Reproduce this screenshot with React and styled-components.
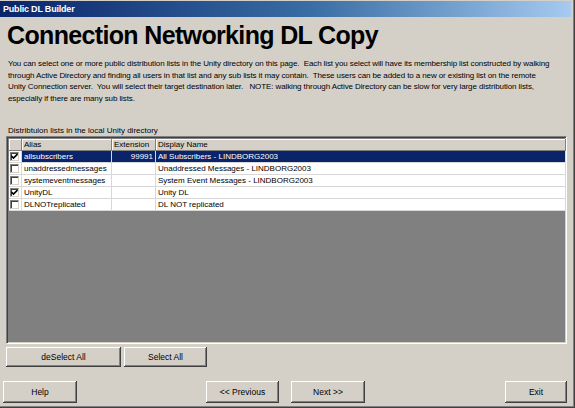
import styled, { createGlobalStyle } from "styled-components";

const GlobalStyle = createGlobalStyle`
  html, body {
    margin: 0;
    padding: 0;
    background: #d4d0c8;
  }
  body {
    font-family: "Liberation Sans", Arial, sans-serif;
    color: #000;
  }
`;

const Window = styled.div`
  width: 575px;
  height: 408px;
  box-sizing: border-box;
  padding: 1px 3px 2px 0;
  background: #d4d0c8;
  border-right: 1px solid #404040;
  border-bottom: 1px solid #404040;
  box-shadow: inset -1px -1px 0 #808080;
  display: flex;
  flex-direction: column;
  overflow: hidden;
`;

const TitleBar = styled.div`
  height: 16px;
  display: flex;
  align-items: center;
  padding-left: 3px;
  background: linear-gradient(to right, #0a246a 0%, #3a6ea5 55%, #a6caf0 100%);
  color: #fff;
  font-weight: bold;
  font-size: 9px;
  letter-spacing: -0.2px;
`;

const Heading = styled.h1`
  margin: 3px 0 0 7px;
  font-size: 25px;
  line-height: 30px;
  letter-spacing: -0.65px;
  font-weight: bold;
`;

const Intro = styled.p`
  margin: 8px 0 0 8px;
  font-size: 8px;
  line-height: 11.6px;
  letter-spacing: -0.1px;
  white-space: nowrap;

  span {
    display: block;
  }
`;

const Label = styled.div`
  margin: 21px 0 0 8px;
  font-size: 8px;
  line-height: 11px;
`;

const ListBox = styled.div`
  margin: 0 0 0 6px;
  width: 561px;
  height: 208px;
  box-sizing: border-box;
  border-top: 1px solid #808080;
  border-left: 1px solid #808080;
  border-right: 1px solid #fff;
  border-bottom: 1px solid #fff;
  box-shadow: inset 1px 1px 0 #404040, inset -1px -1px 0 #d4d0c8;
  padding: 2px 0 0 2px;
  background: #808080;
  display: flex;
  flex-direction: column;
  overflow: hidden;
`;

const Grid = styled.div`
  display: grid;
  grid-template-columns: 13px 90px 44px 1fr;
  font-size: 8px;
`;

const HeadCell = styled.div`
  height: 12px;
  line-height: 12px;
  padding-left: 2px;
  background: #d4d0c8;
  box-shadow: inset -1px -1px 0 #808080, inset 1px 1px 0 #fff;
  white-space: nowrap;
  overflow: hidden;
`;

const Cell = styled.div`
  height: 12px;
  line-height: 12px;
  box-sizing: border-box;
  padding: 0 2px;
  border-right: 1px solid #d8d8d8;
  border-bottom: 1px solid #d8d8d8;
  background: ${(p) => (p.$selected ? "#0a246a" : "#fff")};
  color: ${(p) => (p.$selected ? "#fff" : "#000")};
  text-align: ${(p) => (p.$right ? "right" : "left")};
  white-space: nowrap;
  overflow: hidden;
`;

const CheckCell = styled(Cell)`
  display: flex;
  align-items: center;
  padding: 0 0 0 1px;
  background: #fff;
`;

const Box = styled.div`
  width: 9px;
  height: 9px;
  box-sizing: border-box;
  background: #fff;
  border-top: 1px solid #808080;
  border-left: 1px solid #808080;
  border-right: 1px solid #d4d0c8;
  border-bottom: 1px solid #d4d0c8;
  box-shadow: inset 1px 1px 0 #404040;
  display: flex;
  align-items: center;
  justify-content: center;
`;

const ButtonRow = styled.div`
  display: flex;
  gap: ${(p) => p.$gap || "3px"};
  margin: ${(p) => p.$margin};
`;

const Button = styled.button`
  width: ${(p) => p.$w}px;
  height: ${(p) => p.$h || 20}px;
  margin-left: ${(p) => p.$ml || 0}px;
  padding: 0;
  font-family: "Liberation Sans", Arial, sans-serif;
  font-size: 8.5px;
  color: #000;
  background: #d4d0c8;
  border: none;
  box-shadow: inset -1px -1px 0 #404040, inset 1px 1px 0 #fff,
    inset -2px -2px 0 #808080;
`;

function Check({ on }) {
  return (
    <Box>
      {on && (
        <svg width="7" height="7" viewBox="0 0 7 7">
          <path d="M0.5 3 L2.5 5 L6.5 1" fill="none" stroke="#000" strokeWidth="1.6" />
        </svg>
      )}
    </Box>
  );
}

const rows = [
  { on: true, alias: "allsubscribers", ext: "99991", name: "All Subscribers - LINDBORG2003", sel: true },
  { on: false, alias: "unaddressedmessages", ext: "", name: "Unaddressed Messages - LINDBORG2003" },
  { on: false, alias: "systemeventmessages", ext: "", name: "System Event Messages - LINDBORG2003" },
  { on: true, alias: "UnityDL", ext: "", name: "Unity DL" },
  { on: false, alias: "DLNOTreplicated", ext: "", name: "DL NOT replicated" },
];

export default function App() {
  return (
    <>
      <GlobalStyle />
      <Window>
        <TitleBar>Public DL Builder</TitleBar>
        <Heading>Connection Networking DL Copy</Heading>
        <Intro>
          <span>You can select one or more public distribution lists in the Unity directory on this page.&nbsp; Each list you select will have its membership list constructed by walking</span>
          <span>through Active Directory and finding all users in that list and any sub lists it may contain.&nbsp; These users can be added to a new or existing list on the remote</span>
          <span>Unity Connection server.&nbsp; You will select their target destination later.&nbsp;&nbsp; NOTE: walking through Active Directory can be slow for very large distribution lists,</span>
          <span>especially if there are many sub lists.</span>
        </Intro>
        <Label>Distribtuion lists in the local Unity directory</Label>
        <ListBox>
          <Grid>
            <HeadCell />
            <HeadCell>Alias</HeadCell>
            <HeadCell>Extension</HeadCell>
            <HeadCell>Display Name</HeadCell>
            {rows.map((r) => [
              <CheckCell key={r.alias + "c"}>
                <Check on={r.on} />
              </CheckCell>,
              <Cell key={r.alias} $selected={r.sel}>{r.alias}</Cell>,
              <Cell key={r.alias + "e"} $selected={r.sel} $right>{r.ext}</Cell>,
              <Cell key={r.alias + "n"} $selected={r.sel}>{r.name}</Cell>,
            ])}
          </Grid>
        </ListBox>
        <ButtonRow $margin="3px 0 0 6px">
          <Button $w={115}>deSelect All</Button>
          <Button $w={83}>Select All</Button>
        </ButtonRow>
        <ButtonRow $margin="14px 0 0 3px" $gap="0">
          <Button $w={74} $h={22}>Help</Button>
          <Button $w={73} $h={22} $ml={129}>&lt;&lt; Previous</Button>
          <Button $w={74} $h={22} $ml={12}>Next &gt;&gt;</Button>
          <Button $w={62} $h={22} $ml={140}>Exit</Button>
        </ButtonRow>
      </Window>
    </>
  );
}
